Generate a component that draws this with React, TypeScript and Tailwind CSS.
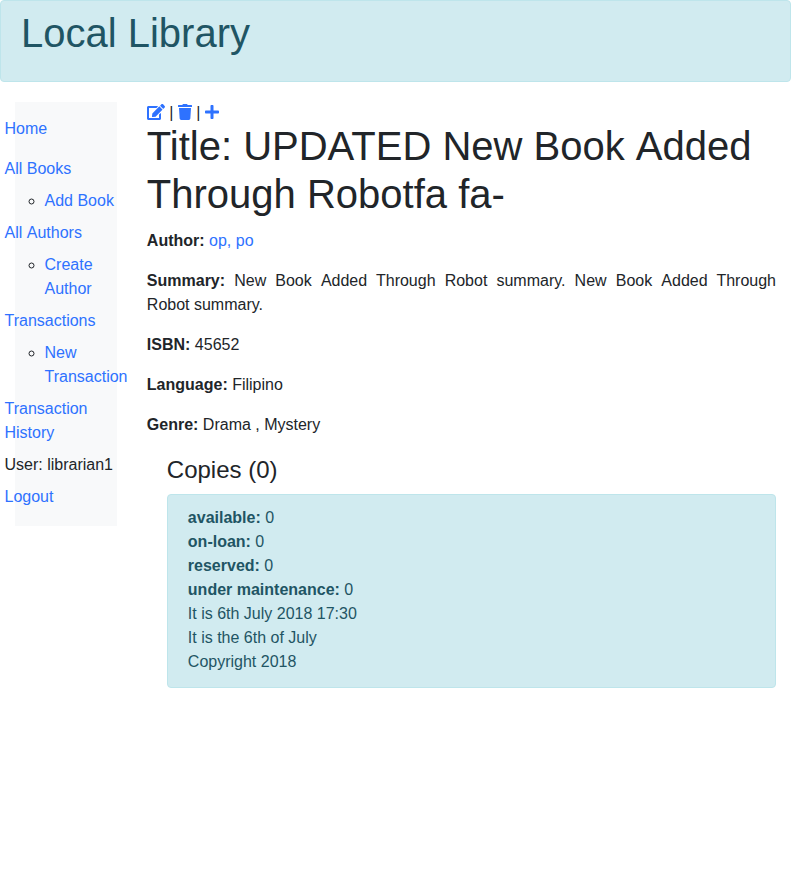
import React from "react";
import { FaEdit, FaTrash, FaPlus } from "react-icons/fa";

function Link({ children }: { children: React.ReactNode }) {
  return <a href="#" className="text-[#2e72ff]">{children}</a>;
}

// A word space that takes no kerning from the capital after it.
function Space() {
  return <span className="tracking-[0.01px]">{" "}</span>;
}

function Sub({ children }: { children: React.ReactNode }) {
  return (
    <ul className="list-[circle] pl-10">
      <li><Link>{children}</Link></li>
    </ul>
  );
}

export default function App() {
  return (
    <div className="min-h-[881px] bg-white font-['Liberation_Sans',Arial,sans-serif] text-base leading-6 text-[#212529]">
      <header className="h-[82px] rounded border border-[#bee5eb] bg-[#d1ebf0] px-5 pt-2 text-[#1f5564]">
        <h1 className="text-[40px] leading-[48px]">Local Library</h1>
      </header>
      <div className="mt-5 flex items-start">
        <nav className="ml-[15px] h-[424px] w-[101.83px] shrink-0 bg-[#f8f9fa] pt-[15px]">
          <div className="-ml-[10.5px] flex w-[113px] flex-col gap-2">
            <div className="mb-2"><Link>Home</Link></div>
            <Link>All Books</Link>
            <Sub>Add Book</Sub>
            <Link>All<Space />Authors</Link>
            <Sub>Create Author</Sub>
            <Link>Transactions</Link>
            <Sub>New Transaction</Sub>
            <Link>Transaction History</Link>
            <div className="whitespace-nowrap">User: librarian1</div>
            <Link>Logout</Link>
          </div>
        </nav>
        <main className="ml-[30px] w-[629.17px]">
          <div className="flex h-5 items-center whitespace-pre">
            <FaEdit className="h-4 w-[18px] text-[#2e72ff]" /><span className="pt-0.5"> | </span>
            <FaTrash className="h-4 w-[14px] text-[#2e72ff]" /><span className="pt-0.5"> | </span>
            <FaPlus className="h-4 w-[14px] text-[#2e72ff]" />
          </div>
          <h1 className="mb-[11px] text-[40px] leading-[48px]">Title: UPDATED New Book<Space />Added Through Robotfa fa-</h1>
          <div className="flex flex-col gap-4">
            <p><b>Author:</b> <Link>op, po</Link></p>
            <p className="text-justify"><b>Summary:</b> New Book<Space />Added Through Robot summary. New Book<Space />Added Through Robot&nbsp;summary.</p>
            <p><b>ISBN:</b> 45652</p>
            <p><b>Language:</b> Filipino</p>
            <p><b>Genre:</b> Drama , Mystery</p>
          </div>
          <section className="ml-5 mt-[18px]">
            <h4 className="mb-2.5 text-2xl leading-[29px]">Copies (0)</h4>
            <div className="h-[194px] rounded border border-[#bee5eb] bg-[#d1ebf0] px-5 py-[11px] text-[#1f5564]">
              <p><b>available:</b> 0</p>
              <p><b>on-loan:</b> 0</p>
              <p><b>reserved:</b> 0</p>
              <p><b>under maintenance:</b> 0</p>
              <p>It is 6th July 2018 17:30</p>
              <p>It is the 6th of July</p>
              <p>Copyright 2018</p>
            </div>
          </section>
        </main>
      </div>
    </div>
  );
}
